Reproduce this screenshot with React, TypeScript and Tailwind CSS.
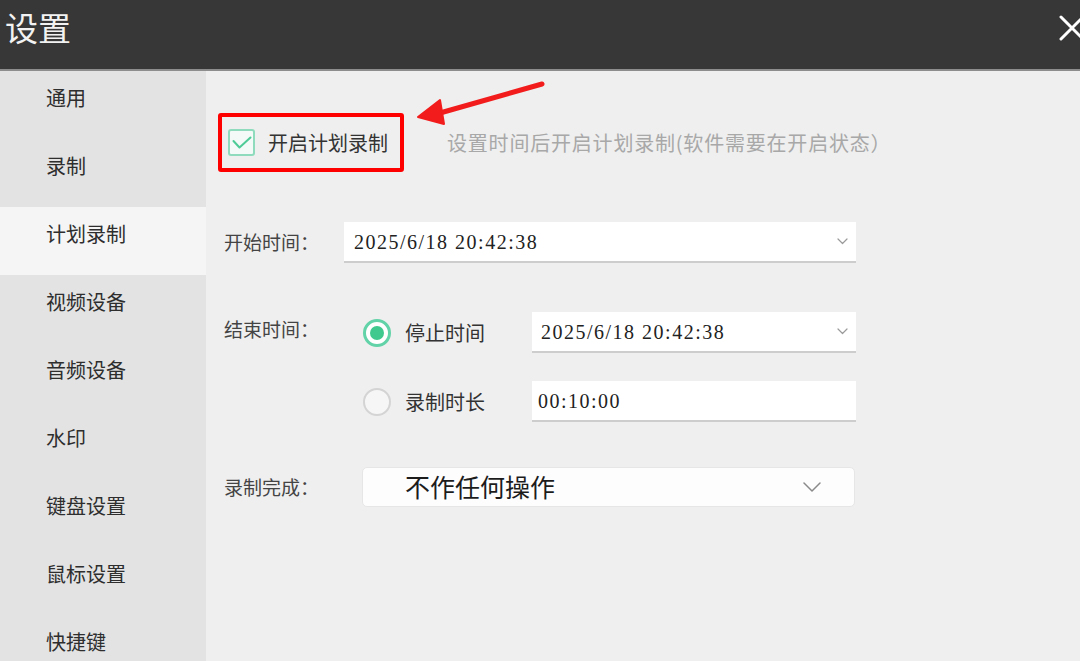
import React from "react";

/**
 * 设置 — 计划录制 settings page, recording-schedule tab selected.
 */

const CJK = { fontFamily: '"Noto Sans CJK SC", "Noto Sans", sans-serif' };
const NUM = { fontFamily: '"Liberation Serif", "Noto Sans CJK SC", serif' };

const NAV = ["通用", "录制", "计划录制", "视频设备", "音频设备", "水印", "键盘设置", "鼠标设置", "快捷键"];

function Chevron({ big = false }: { big?: boolean }) {
  return big ? (
    <svg width="18" height="10" viewBox="0 0 18 10" fill="none">
      <path d="M1 1l8 8 8-8" stroke="#8a8a8a" strokeWidth="1.5" strokeLinecap="round" strokeLinejoin="round" />
    </svg>
  ) : (
    <svg width="11" height="7" viewBox="0 0 11 7" fill="none">
      <path d="M1 1l4.5 4.5L10 1" stroke="#9a9a9a" strokeWidth="1.2" strokeLinecap="round" strokeLinejoin="round" />
    </svg>
  );
}

function Radio({ checked }: { checked: boolean }) {
  return checked ? (
    <span className="flex h-[28px] w-[28px] items-center justify-center rounded-full border-[3px] border-[#62d3a8] bg-white">
      <span className="h-[14px] w-[14px] rounded-full bg-[#3fc98e]" />
    </span>
  ) : (
    <span className="h-[28px] w-[28px] rounded-full border-2 border-[#d4d4d4] bg-[#f6f6f6]" />
  );
}

function TimeField({ value, width, dropdown = true, pad = 10 }: { value: string; width: string; dropdown?: boolean; pad?: number }) {
  return (
    <div className={`flex h-[41px] items-center justify-between border-b-2 border-[#cdcdcd] bg-white pr-[8px] ${width}`}>
      <span className="text-[20px] tracking-[1.5px] text-[#222]" style={{ ...NUM, paddingLeft: pad }}>
        {value}
      </span>
      {dropdown && <Chevron />}
    </div>
  );
}

export default function App() {
  return (
    <div className="relative flex h-[661px] w-[1080px] flex-col overflow-hidden bg-[#efefef]" style={CJK}>
      {/* title bar */}
      <div className="flex h-[71px] shrink-0 items-start justify-between border-b-2 border-[#8d8d8d] bg-[#373737]">
        <span className="pl-[5px] pt-[11px] text-[33px] leading-[33px] text-[#f2f2f2]">设置</span>
        <svg className="mr-[-5px] mt-[15px]" width="26" height="26" viewBox="0 0 26 26">
          <path d="M2 2l22 22M24 2L2 24" stroke="#ffffff" strokeWidth="3" strokeLinecap="round" />
        </svg>
      </div>

      <div className="flex min-h-0 flex-1">
        {/* sidebar */}
        <nav className="w-[206px] shrink-0 overflow-hidden bg-[#e3e3e3]">
          {NAV.map((item) => (
            <div
              key={item}
              className={`h-[68px] pl-[46px] pt-[15px] text-[20px] leading-[24px] text-[#2e2e2e] ${
                item === "计划录制" ? "bg-[#f5f5f5]" : ""
              }`}
            >
              {item}
            </div>
          ))}
        </nav>

        {/* content */}
        <main className="relative flex-1 pl-[18px] pt-[42px] text-[19px] text-[#444]">
          <div className="flex items-center">
            <div className="-ml-[6px] flex h-[59px] w-[186px] items-center rounded-[3px] border-4 border-[#ff0000] pl-[6px]">
              <span className="flex h-[27px] w-[27px] items-center justify-center rounded-[3px] border-2 border-[#8edcbd] bg-[#f3faf7]">
                <svg width="20" height="13" viewBox="0 0 20 13" fill="none">
                  <path d="M1.5 5l6 6.5L18.5 1.5" stroke="#4fcb98" strokeWidth="2" strokeLinecap="round" strokeLinejoin="round" />
                </svg>
              </span>
              <span className="ml-[13px] text-[20px] text-[#333]">开启计划录制</span>
            </div>
            <span className="ml-[43px] text-[20px] tracking-[0.8px] text-[#a8a8a8]">设置时间后开启计划录制(软件需要在开启状态）</span>
          </div>

          <div className="mt-[50px] flex items-center">
            <span className="w-[120px]">开始时间：</span>
            <TimeField value="2025/6/18 20:42:38" width="w-[512px]" />
          </div>

          <div className="mt-[49px] flex items-start">
            <span className="w-[120px] pt-[5px] leading-[24px]">结束时间：</span>
            <div className="ml-[19px] flex flex-col gap-[28px]">
              <div className="flex items-center">
                <Radio checked />
                <span className="ml-[14px] w-[127px] text-[20px] text-[#333]">停止时间</span>
                <TimeField value="2025/6/18 20:42:38" width="w-[324px]" pad={9} />
              </div>
              <div className="flex items-center">
                <Radio checked={false} />
                <span className="ml-[14px] w-[127px] text-[20px] text-[#333]">录制时长</span>
                <TimeField value="00:10:00" width="w-[324px]" dropdown={false} pad={6} />
              </div>
            </div>
          </div>

          <div className="mt-[45px] flex items-center">
            <span className="w-[138px]">录制完成：</span>
            <div className="flex h-[40px] w-[493px] items-center justify-between rounded-[5px] border border-[#e6e6e6] bg-[#fdfdfd] pl-[42px] pr-[33px]">
              <span className="text-[25px] text-[#1c1c1c]">不作任何操作</span>
              <Chevron big />
            </div>
          </div>
        </main>
      </div>

      {/* annotation arrow */}
      <svg className="absolute left-[410px] top-[76px]" width="140" height="52" viewBox="0 0 140 52">
        <path d="M132 8L30 37" stroke="#f21c1c" strokeWidth="5" strokeLinecap="round" />
        <path d="M8 41L30 24L34 48Z" fill="#f21c1c" stroke="#f21c1c" strokeWidth="2" strokeLinejoin="round" />
      </svg>
    </div>
  );
}
